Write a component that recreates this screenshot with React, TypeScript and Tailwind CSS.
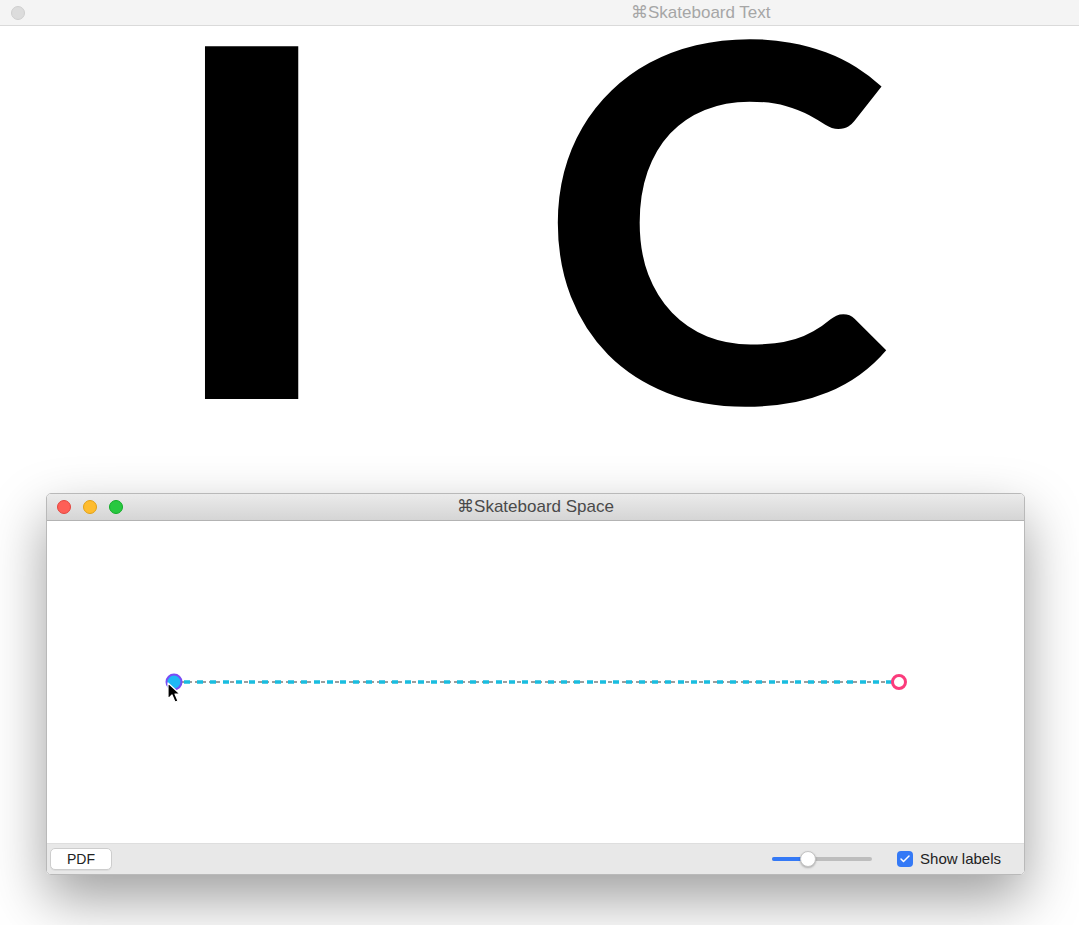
import { Check } from 'lucide-react';

function Cursor() {
  return (
    <svg width="14" height="22" viewBox="0 0 14 22" className="absolute left-[120px] top-[161px]">
      <path d="M1 1 L1 17 L5 13 L8 20 L11 19 L8 12 L13 12 Z" fill="#000" stroke="#fff" strokeWidth="1.2" strokeLinejoin="round" />
    </svg>
  );
}

function Canvas() {
  return (
    <div className="relative flex-1 bg-white">
      <svg width="979" height="322" className="block">
        <line x1="127" y1="161" x2="852" y2="161" stroke="#7d7d7d" strokeWidth="1.3" strokeDasharray="4 3" />
        <line x1="137" y1="161" x2="846" y2="161" stroke="#19bde0" strokeWidth="3.5" strokeDasharray="6 7" />
        <circle cx="127" cy="161" r="7.5" fill="#1fb8f5" stroke="#7a4cf5" strokeWidth="2" />
        <circle cx="852" cy="161" r="6.5" fill="#fff" stroke="#fb3c7c" strokeWidth="3" />
      </svg>
      <Cursor />
    </div>
  );
}

export default function App() {
  return (
    <div className="relative w-[1079px] h-[925px] overflow-hidden bg-white font-['Liberation_Sans',sans-serif]">
      <div className="flex h-[26px] items-center border-b border-[#dadada] bg-[#f4f4f4]">
        <span className="ml-[11px] h-[14px] w-[14px] rounded-full border border-[#cfcfcf] bg-[#dcdcdc]" />
        <span className="ml-[606px] text-[17px] text-[#a6a6a6]">⌘Skateboard Text</span>
      </div>

      {/* big letters of the text window */}
      <div className="flex font-['Lato',sans-serif] font-black leading-[370px] text-black text-[486px]">
        <span className="ml-[178px] scale-x-[1.27]">I</span>
        <span className="ml-[230px] scale-x-[1.097] scale-y-[1.02]">C</span>
      </div>

      <div className="absolute left-[46px] top-[493px] flex h-[382px] w-[979px] flex-col overflow-hidden rounded-[5px] border border-[#b9b9b9] shadow-[0_24px_55px_rgba(0,0,0,0.38)]">
        <div className="relative flex h-[28px] items-center border-b border-[#b3b3b3] bg-gradient-to-b from-[#ebebeb] to-[#d5d5d5]">
          <div className="ml-[10px] flex gap-[12px]">
            <span className="h-[14px] w-[14px] rounded-full border border-[#e2463f] bg-[#fe5f57]" />
            <span className="h-[14px] w-[14px] rounded-full border border-[#e1a116] bg-[#febc2e]" />
            <span className="h-[14px] w-[14px] rounded-full border border-[#12ac28] bg-[#28c840]" />
          </div>
          <span className="absolute left-1/2 -translate-x-1/2 whitespace-nowrap text-[17px] text-[#4a4a4a]">⌘Skateboard Space</span>
        </div>

        <Canvas />

        <div className="flex h-[32px] items-center border-t border-[#dedede] bg-[#e8e8e8] px-[3px]">
          <button className="h-[22px] w-[62px] rounded-[5px] border border-[#cdcdcd] bg-white text-[14px] text-[#222] shadow-[0_1px_0_rgba(0,0,0,0.05)]">
            PDF
          </button>
          <div className="ml-auto flex items-center">
            <div className="relative h-[4px] w-[100px] rounded-full bg-[#bdbdbd]">
              <div className="h-[4px] w-[36px] rounded-full bg-[#3479f6]" />
              <div className="absolute left-[28px] top-[-6px] h-[16px] w-[16px] rounded-full border border-[#c4c4c4] bg-white shadow-[0_1px_2px_rgba(0,0,0,0.25)]" />
            </div>
            <div className="ml-[25px] flex h-[16px] w-[16px] items-center justify-center rounded-[4px] bg-[#3479f6]">
              <Check className="h-[12px] w-[12px] text-white" strokeWidth={3} />
            </div>
            <span className="ml-[7px] mr-[20px] text-[15px] text-[#222]">Show labels</span>
          </div>
        </div>
      </div>
    </div>
  );
}
